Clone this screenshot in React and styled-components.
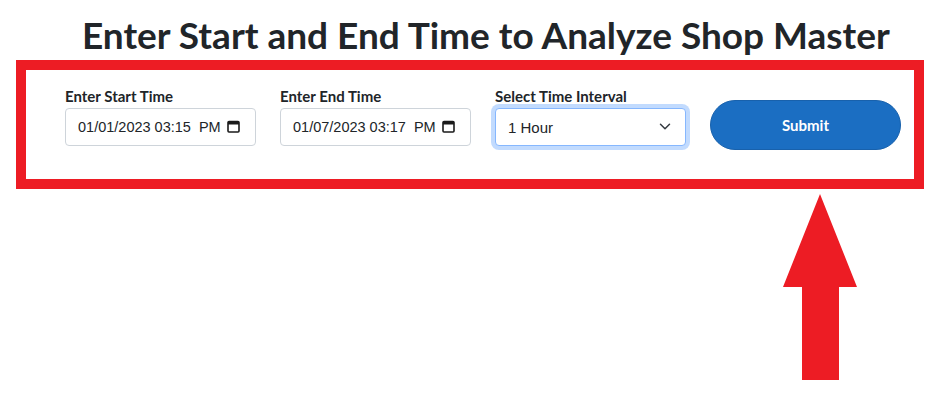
import React from 'react';
import styled, { createGlobalStyle } from 'styled-components';

const GlobalStyle = createGlobalStyle`
    html, body {
        margin: 0;
        padding: 0;
        background: #ffffff;
        font-family: 'Lato', 'Liberation Sans', sans-serif;
        color: #212529;
    }
    * {
        box-sizing: border-box;
    }
`;

const Page = styled.div`
    width: 942px;
    height: 410px;
    overflow: hidden;
`;

const Title = styled.h1`
    margin: 0;
    padding: 12px 0 0 82px;
    height: 60px;
    font-size: 37px;
    line-height: 46px;
    font-weight: 700;
    color: #212529;
    white-space: nowrap;
`;

const Highlight = styled.div`
    margin: 0 18px 0 16px;
    height: 129px;
    border: 10px solid #ed1c24;
    padding: 14px 0 0 39px;
    display: flex;
    align-items: flex-start;
    gap: 24px;
`;

const Field = styled.div`
    width: 191px;
    display: flex;
    flex-direction: column;
`;

const Label = styled.label`
    display: block;
    font-size: 15px;
    line-height: 24px;
    font-weight: 700;
    color: #212529;
    white-space: nowrap;
`;

const Control = styled.div`
    position: relative;
    width: 191px;
    height: 38px;
`;

const TextBox = styled.input`
    width: 100%;
    height: 100%;
    padding: 0 30px 0 12px;
    border: 1px solid #ced4da;
    border-radius: 4px;
    background: #fff;
    color: #212529;
    font-family: 'Liberation Sans', Arial, sans-serif;
    font-size: 14.5px;
    outline: none;
    white-space: pre;
`;

const Select = styled.select`
    appearance: none;
    width: 100%;
    height: 100%;
    padding: 0 36px 0 12px;
    border: 1px solid #86b7fe;
    border-radius: 4px;
    box-shadow: 0 0 0 4px rgba(13, 110, 253, 0.25);
    background: #fff;
    color: #212529;
    font-family: 'Liberation Sans', Arial, sans-serif;
    font-size: 15px;
    outline: none;
`;

const Icon = styled.svg`
    position: absolute;
    right: ${(p) => p.$right}px;
    top: ${(p) => p.$top}px;
    pointer-events: none;
`;

const SubmitButton = styled.button`
    margin-top: 16px;
    width: 191px;
    height: 50px;
    border: 1px solid #1861ac;
    border-radius: 25px;
    background: #1b6ec2;
    color: #ffffff;
    font-family: 'Lato', 'Liberation Sans', sans-serif;
    font-size: 15px;
    font-weight: 700;
`;

const ArrowBox = styled.div`
    padding: 5px 0 0 783px;
    line-height: 0;
`;

const CalendarIcon = () => (
    <Icon $right={16} $top={12} width="13" height="13" viewBox="0 0 13 13">
        <rect x="1" y="1.5" width="11" height="10.5" rx="1" fill="none" stroke="#1a1a1a" strokeWidth="1.6" />
        <rect x="1" y="1.5" width="11" height="3" fill="#1a1a1a" />
    </Icon>
);

const DateField = ({ label, value }) => (
    <Field>
        <Label>{label}</Label>
        <Control>
            <TextBox type="text" readOnly value={value} />
            <CalendarIcon />
        </Control>
    </Field>
);

const App = () => {
    return (
        <>
            <GlobalStyle />
            <Page>
                <Title>Enter Start and End Time to Analyze Shop Master</Title>
                <Highlight>
                    <DateField label="Enter Start Time" value="01/01/2023 03:15  PM" />
                    <DateField label="Enter End Time" value="01/07/2023 03:17  PM" />
                    <Field>
                        <Label>Select Time Interval</Label>
                        <Control>
                            <Select defaultValue="1">
                                <option value="1">1 Hour</option>
                                <option value="2">2 Hours</option>
                                <option value="24">1 Day</option>
                            </Select>
                            <Icon $right={15} $top={14} width="12" height="9" viewBox="0 0 16 12">
                                <path d="m2 3 6 6 6-6" fill="none" stroke="#343a40" strokeWidth="2" strokeLinecap="round" strokeLinejoin="round" />
                            </Icon>
                        </Control>
                    </Field>
                    <SubmitButton type="button">Submit</SubmitButton>
                </Highlight>
                <ArrowBox>
                    <svg width="74" height="186" viewBox="0 0 74 186">
                        <polygon points="37,0 74,93 56,93 56,186 19,186 19,93 0,93" fill="#ed1c24" />
                    </svg>
                </ArrowBox>
            </Page>
        </>
    );
};

export default App;
